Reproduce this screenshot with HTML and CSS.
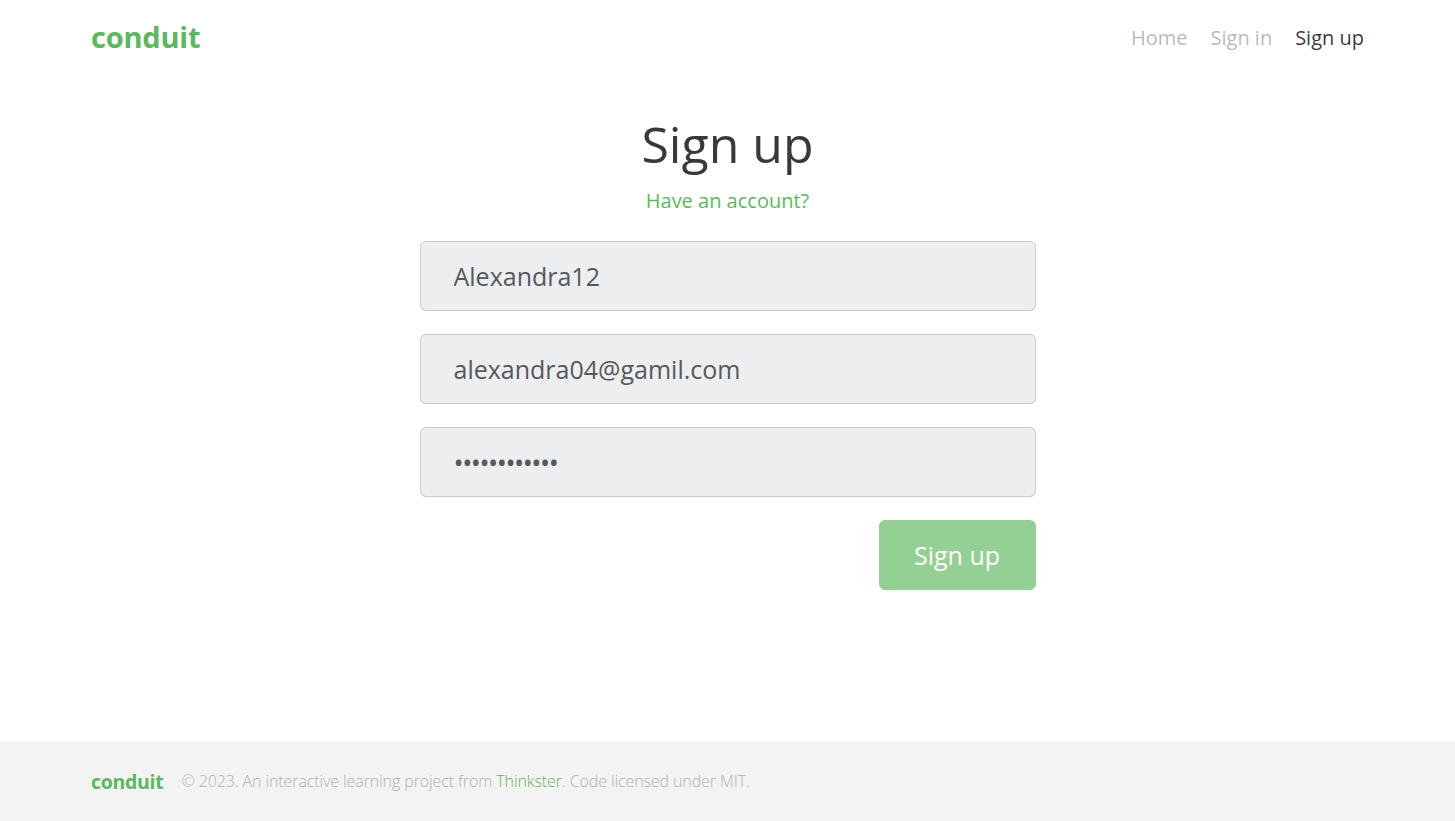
FILE: index.html
```html
<!DOCTYPE html>
<html lang="en">
<head>
<meta charset="utf-8">
<title>Sign up — Conduit</title>
<link rel="stylesheet" href="styles.css">
</head>
<body>
<nav class="navbar">
  <a class="brand" href="#">conduit</a>
  <ul class="nav">
    <li><a class="nav-link" href="#">Home</a></li>
    <li><a class="nav-link" href="#">Sign in</a></li>
    <li><a class="nav-link active" href="#">Sign up</a></li>
  </ul>
</nav>
<main class="auth-page">
  <h1 class="title">Sign up</h1>
  <p class="switch"><a href="#">Have an account?</a></p>
  <form class="form">
    <input class="field" type="text" value="Alexandra12" disabled>
    <input class="field" type="text" value="alexandra04@gamil.com" disabled>
    <input class="field" type="password" value="password1234" disabled>
    <div class="actions"><button class="btn" type="button" disabled>Sign up</button></div>
  </form>
</main>
<footer class="footer">
  <a class="footer-brand" href="#">conduit</a>
  <span class="attribution">© 2023. An interactive learning project from <a href="#">Thinkster</a>. Code licensed under MIT.</span>
</footer>
</body>
</html>
```
FILE: styles.css
```css
* { box-sizing: border-box; }
html, body { margin: 0; padding: 0; }
body {
  font-family: "Open Sans", "Liberation Sans", sans-serif;
  font-size: 20px;
  line-height: 1.5;
  color: #373a3c;
  background: #fff;
  min-height: 100vh;
  display: flex;
  flex-direction: column;
}
a { text-decoration: none; }

.navbar {
  display: flex;
  align-items: center;
  justify-content: space-between;
  height: 75px;
  padding: 0 91px;
}
.brand {
  font-family: "Open Sans", sans-serif;
  font-weight: 700;
  font-size: 29px;
  color: #5cb85c;
  letter-spacing: -0.2px;
  line-height: 1;
  margin-top: -2px;
}
.nav {
  display: flex;
  gap: 23px;
  list-style: none;
  margin: 0;
  padding: 0;
}
.nav-link {
  color: rgba(0,0,0,0.3);
  font-size: 20px;
}
.nav-link.active { color: rgba(0,0,0,0.8); }

.auth-page {
  width: 616px;
  margin: 0 auto;
  padding-top: 36px;
  display: flex;
  flex-direction: column;
}
.title {
  margin: 0;
  text-align: center;
  font-size: 50px;
  font-weight: 400;
  line-height: 66px;
}
.switch {
  margin: 9px 0 25px;
  text-align: center;
  font-size: 20px;
  line-height: 30px;
}
.switch a { color: #5cb85c; }

.form {
  display: flex;
  flex-direction: column;
  gap: 23px;
}
.field {
  height: 70px;
  width: 100%;
  padding: 0 33px;
  font-family: inherit;
  font-size: 25px;
  color: #55595c;
  background: #eceeef;
  border: 1px solid rgba(0,0,0,0.15);
  border-radius: 6px;
  opacity: 1;
  -webkit-text-fill-color: #55595c;
}
.field[type="password"] { font-size: 27px; letter-spacing: -1.5px; }
.actions { display: flex; justify-content: flex-end; }
.btn {
  width: 157px;
  height: 70px;
  font-family: inherit;
  font-size: 25px;
  color: #fff;
  background: #5cb85c;
  border: 1px solid #5cb85c;
  border-radius: 6px;
  opacity: 0.65;
  padding: 0;
}

.footer {
  margin-top: auto;
  height: 80px;
  background: #f3f3f3;
  display: flex;
  align-items: center;
  padding: 0 91px;
}
.footer-brand {
  font-weight: 700;
  font-size: 19.5px;
  color: #5cb85c;
  letter-spacing: -0.3px;
  margin-right: 18px;
  margin-top: 2px;
}
.attribution {
  font-size: 16px;
  font-weight: 300;
  color: #b0b0b0;
  letter-spacing: -0.1px;
}
.attribution a { color: #5cb85c; }
```
